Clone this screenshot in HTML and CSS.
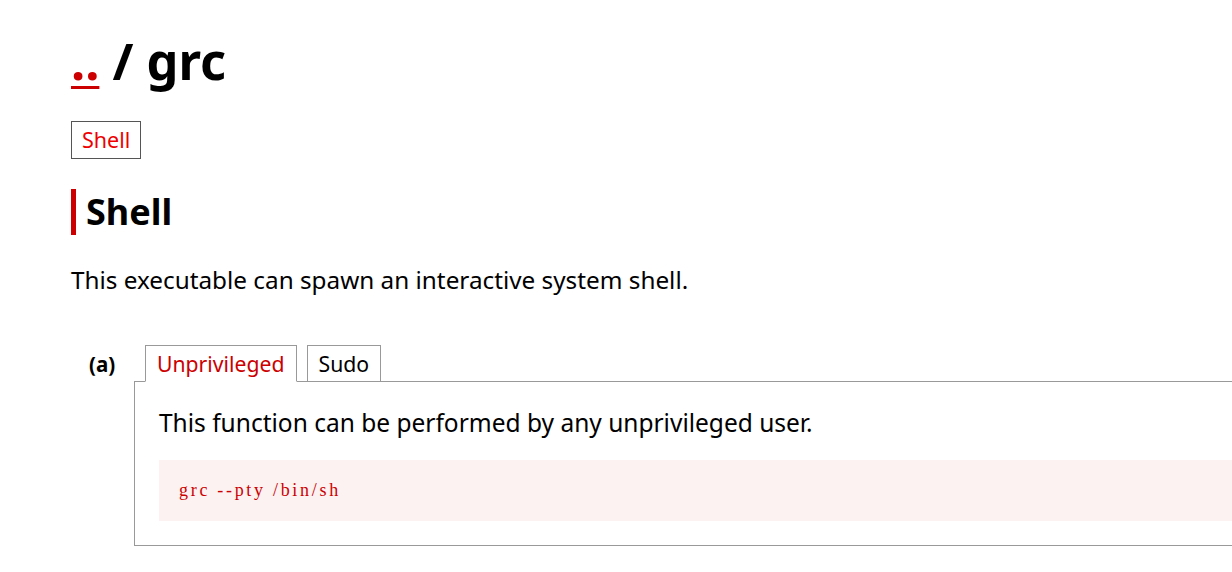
FILE: index.html
```html
<!DOCTYPE html>
<html>
<head>
<meta charset="utf-8">
<link rel="stylesheet" href="styles.css">
</head>
<body>
<main class="page">
  <h1 class="title"><a class="up" href="#">..</a> / grc</h1>
  <ul class="tags">
    <li><a class="tag" href="#">Shell</a></li>
  </ul>
  <h2 class="section">Shell</h2>
  <p class="desc">This executable can spawn an interactive system shell.</p>
  <ol class="examples">
    <li class="example">
      <span class="label">(a)</span>
      <div class="tabset">
        <div class="tabs">
          <span class="tab active">Unprivileged</span>
          <span class="tab">Sudo</span>
        </div>
        <div class="panel">
          <p class="panel-text">This function can be performed by any unprivileged user.</p>
          <pre class="code"><code class="code-text">grc --pty /bin/sh</code></pre>
        </div>
      </div>
    </li>
  </ol>
</main>
</body>
</html>
```
FILE: styles.css
```css
html, body {
  margin: 0;
  padding: 0;
  overflow: hidden;
  background: #fff;
}
body {
  font-family: "Noto Sans", "Open Sans", sans-serif;
  color: #000;
}
.page {
  padding: 21px 0 0 71px;
}
.title {
  margin: 0;
  font-size: 50.5px;
  font-weight: 700;
  line-height: 80px;
}
.up {
  color: #c00;
  text-decoration: underline;
  text-decoration-thickness: 3px;
  text-underline-offset: 6px;
}
.tags {
  list-style: none;
  margin: 20px 0 0;
  padding: 0;
  display: flex;
}
.tag {
  display: block;
  border: 1px solid #555;
  color: #e00;
  text-decoration: none;
  font-size: 21.5px;
  line-height: 36px;
  padding: 0 10px;
}
.section {
  margin: 30px 0 0;
  border-left: 5px solid #c00;
  padding-left: 10px;
  font-size: 36px;
  line-height: 46px;
  font-weight: 700;
}
.desc {
  margin: 27px 0 0;
  font-size: 24.3px;
  line-height: 36px;
}
.examples {
  list-style: none;
  margin: 47px -60px 0 0;
  padding: 0;
}
.example {
  display: flex;
  align-items: flex-start;
}
.label {
  width: 63px;
  flex: none;
  font-weight: 700;
  font-size: 20.5px;
  line-height: 36px;
  margin-top: 1px;
  padding-left: 18px;
  box-sizing: border-box;
}
.tabset {
  flex: 1;
}
.tabs {
  display: flex;
  gap: 10px;
  padding-left: 11px;
  margin-bottom: -1px;
  position: relative;
}
.tab {
  border: 1px solid #999;
  background: #fff;
  font-size: 21.2px;
  line-height: 35px;
  padding: 0 11px;
}
.tab.active {
  color: #c00;
  border-bottom-color: #fff;
}
.panel {
  border: 1px solid #999;
  padding: 22px 24px 24px;
}
.panel-text {
  margin: 0;
  font-size: 24.5px;
  line-height: 38px;
}
.code {
  margin: 18px 0 0;
  background: #fdf2f2;
  color: #c00;
  font-family: "Liberation Serif", "DejaVu Serif", serif;
  font-size: 18px;
  line-height: 25px;
  padding: 18px 20px;
}
.code-text {
  font-family: inherit;
  font-size: inherit;
  letter-spacing: 2.7px;
}
```
